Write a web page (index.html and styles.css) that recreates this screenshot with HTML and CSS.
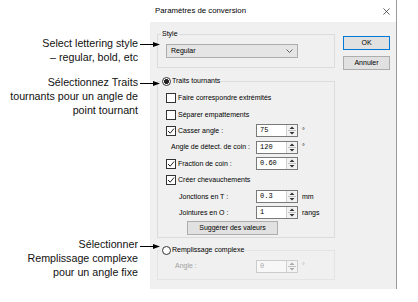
FILE: index.html
```html
<!DOCTYPE html>
<html lang="fr">
<head>
    <meta charset="UTF-8">
    <meta name="viewport" content="width=device-width, initial-scale=1.0">
    <title>Paramètres de conversion</title>
    <link rel="stylesheet" href="styles.css">
</head>
<body>
<div id="page">
    <div class="notes">
        <div class="note note-style">
            <div class="note-line"><span>Select lettering style</span><svg class="arrow" viewBox="0 0 20 7"><line x1="0" y1="3.5" x2="15" y2="3.5"/><polygon points="13,1 20,3.5 13,6"/></svg></div>
            <div class="note-line">– regular, bold, etc</div>
        </div>
        <div class="note note-traits">
            <div class="note-line"><span>Sélectionnez Traits</span><svg class="arrow" viewBox="0 0 20 7"><line x1="0" y1="3.5" x2="15" y2="3.5"/><polygon points="13,1 20,3.5 13,6"/></svg></div>
            <div class="note-line">tournants pour un angle de</div>
            <div class="note-line">point tournant</div>
        </div>
        <div class="note note-fill">
            <div class="note-line"><span>Sélectionner</span><svg class="arrow arrow-low" viewBox="0 0 20 7"><line x1="0" y1="3.5" x2="15" y2="3.5"/><polygon points="13,1 20,3.5 13,6"/></svg></div>
            <div class="note-line">Remplissage complexe</div>
            <div class="note-line">pour un angle fixe</div>
        </div>
    </div>

    <div class="dialog">
        <div class="titlebar">
            <span class="title">Paramètres de conversion</span>
            <svg class="close" viewBox="0 0 8 8"><path d="M0.5 0.5 L7.5 7.5 M7.5 0.5 L0.5 7.5"/></svg>
        </div>
        <div class="dlg-body">
            <div class="groups">
                <fieldset class="group group-style">
                    <legend>Style</legend>
                    <div class="combo">
                        <span>Regular</span>
                        <svg class="chevron" viewBox="0 0 7 4"><path d="M0.5 0.5 L3.5 3.5 L6.5 0.5"/></svg>
                    </div>
                </fieldset>

                <fieldset class="group group-traits">
                    <legend><span class="radio checked"></span>Traits tournants</legend>
                    <div class="row">
                        <span class="box"></span>Faire correspondre extrémités
                    </div>
                    <div class="row">
                        <span class="box"></span>Séparer empattements
                    </div>
                    <div class="row">
                        <span class="cell"><span class="box checked"><svg viewBox="0 0 8 8"><path d="M1 4 L3.2 6.2 L7 1.6"/></svg></span>Casser angle :</span>
                        <span class="field"><span class="value">75</span><span class="spin"><svg viewBox="0 0 9 11"><polygon points="2,4 7,4 4.5,1.5"/><line x1="0.5" y1="5.5" x2="8.5" y2="5.5"/><polygon points="2,7 7,7 4.5,9.5"/></svg></span></span>
                        <span class="unit">°</span>
                    </div>
                    <div class="row">
                        <span class="cell cell-right">Angle de détect. de coin :</span>
                        <span class="field"><span class="value">120</span><span class="spin"><svg viewBox="0 0 9 11"><polygon points="2,4 7,4 4.5,1.5"/><line x1="0.5" y1="5.5" x2="8.5" y2="5.5"/><polygon points="2,7 7,7 4.5,9.5"/></svg></span></span>
                        <span class="unit">°</span>
                    </div>
                    <div class="row">
                        <span class="cell"><span class="box checked"><svg viewBox="0 0 8 8"><path d="M1 4 L3.2 6.2 L7 1.6"/></svg></span>Fraction de coin :</span>
                        <span class="field"><span class="value">0.60</span><span class="spin"><svg viewBox="0 0 9 11"><polygon points="2,4 7,4 4.5,1.5"/><line x1="0.5" y1="5.5" x2="8.5" y2="5.5"/><polygon points="2,7 7,7 4.5,9.5"/></svg></span></span>
                    </div>
                    <div class="row">
                        <span class="box checked"><svg viewBox="0 0 8 8"><path d="M1 4 L3.2 6.2 L7 1.6"/></svg></span>Créer chevauchements
                    </div>
                    <div class="row">
                        <span class="cell cell-indent">Jonctions en T :</span>
                        <span class="field"><span class="value">0.3</span><span class="spin"><svg viewBox="0 0 9 11"><polygon points="2,4 7,4 4.5,1.5"/><line x1="0.5" y1="5.5" x2="8.5" y2="5.5"/><polygon points="2,7 7,7 4.5,9.5"/></svg></span></span>
                        <span class="unit">mm</span>
                    </div>
                    <div class="row">
                        <span class="cell cell-indent">Jointures en O :</span>
                        <span class="field"><span class="value">1</span><span class="spin"><svg viewBox="0 0 9 11"><polygon points="2,4 7,4 4.5,1.5"/><line x1="0.5" y1="5.5" x2="8.5" y2="5.5"/><polygon points="2,7 7,7 4.5,9.5"/></svg></span></span>
                        <span class="unit">rangs</span>
                    </div>
                    <button class="btn btn-suggest">Suggérer des valeurs</button>
                </fieldset>

                <fieldset class="group group-fill">
                    <legend><span class="radio"></span>Remplissage complexe</legend>
                    <div class="row disabled">
                        <span class="cell cell-disabled">Angle :</span>
                        <span class="field"><span class="value">0</span><span class="spin"><svg viewBox="0 0 9 11"><polygon points="2,4 7,4 4.5,1.5"/><line x1="0.5" y1="5.5" x2="8.5" y2="5.5"/><polygon points="2,7 7,7 4.5,9.5"/></svg></span></span>
                        <span class="unit">°</span>
                    </div>
                </fieldset>
            </div>
            <div class="buttons">
                <button class="btn btn-default">OK</button>
                <button class="btn">Annuler</button>
            </div>
        </div>
    </div>
</div>
</body>
</html>
```

FILE: styles.css
```css
body {
    margin: 0;
    background: #fff;
}

#page {
    display: flex;
    align-items: flex-start;
    width: 418px;
    height: 302px;
    overflow: hidden;
}

/* callouts on the left */
.notes {
    position: relative;
    z-index: 1;
    flex: none;
    width: 150px;
    box-sizing: border-box;
    padding: 36px 12px 0 0;
    font: 10.7px/14px "Liberation Sans", Arial, sans-serif;
    color: #111;
}

.note-traits {
    margin-top: 11px;
}

.note-fill {
    margin-top: 120px;
}

.note-line {
    display: flex;
    justify-content: flex-end;
    align-items: center;
    white-space: nowrap;
}

.arrow {
    flex: none;
    width: 20px;
    height: 7px;
    margin: 2px -22px 0 2px;
}

.arrow-low {
    margin-top: 5px;
}

.arrow line {
    stroke: #000;
    stroke-width: 1;
}

.arrow polygon {
    fill: #000;
}

/* dialog */
.dialog {
    flex: none;
    width: 247px;
    box-sizing: border-box;
    border-right: 1px solid #9a9a9a;
    font: 7px/10px "Liberation Sans", Arial, sans-serif;
    color: #000;
}

.titlebar {
    display: flex;
    align-items: center;
    justify-content: space-between;
    height: 22px;
    padding: 0 6px 0 5px;
    background: #fff;
}

.title {
    font-size: 7.8px;
}

.close {
    width: 7px;
    height: 7px;
}

.close path {
    stroke: #222;
    stroke-width: 0.8;
    fill: none;
}

.dlg-body {
    display: flex;
    gap: 8px;
    padding: 7px 7px 9px 7px;
    background: #f0f0f0;
}

.groups {
    flex: none;
    width: 178px;
}

.group {
    margin: 0;
    padding: 0 6px 0 8px;
    border: 1px solid #dcdcdc;
    min-width: 0;
}

.group legend {
    display: flex;
    align-items: center;
    height: 10px;
    margin-left: -5px;
    padding: 0 1px;
}

.group-style {
    padding-top: 5px;
    padding-bottom: 9px;
}

.group-traits {
    margin-top: 8px;
    padding-top: 4px;
    padding-bottom: 2px;
}

.group-fill {
    margin-top: 7px;
    padding-top: 3px;
    padding-bottom: 4px;
    border-color: #e4e4e4;
}

.combo {
    display: flex;
    align-items: center;
    justify-content: space-between;
    width: 132px;
    height: 14px;
    box-sizing: border-box;
    padding: 0 4px 0 4px;
    background: #e5e5e5;
    border: 1px solid #adadad;
}

.chevron {
    width: 7px;
    height: 4px;
}

.chevron path {
    stroke: #444;
    stroke-width: 0.8;
    fill: none;
}

.radio {
    display: inline-block;
    width: 9px;
    height: 9px;
    box-sizing: border-box;
    margin-right: 1px;
    border: 1px solid #333;
    border-radius: 50%;
    background: #fff;
}

.radio.checked {
    background: radial-gradient(circle, #222 0 2.2px, #fff 2.7px);
}

.row {
    display: flex;
    align-items: center;
    height: 16.4px;
    white-space: nowrap;
}

.box {
    display: inline-flex;
    align-items: center;
    justify-content: center;
    flex: none;
    width: 10px;
    height: 10px;
    box-sizing: border-box;
    margin-right: 2px;
    border: 1px solid #333;
    background: #fff;
}

.box svg {
    width: 8px;
    height: 8px;
}

.box path {
    stroke: #222;
    stroke-width: 1;
    fill: none;
}

.cell {
    display: flex;
    align-items: center;
    flex: none;
    width: 90px;
}

.cell-right {
    justify-content: flex-end;
    padding-right: 6px;
    box-sizing: border-box;
}

.cell-indent {
    padding-left: 13px;
    box-sizing: border-box;
}

.cell-disabled {
    padding-left: 9px;
    box-sizing: border-box;
    color: #a0a0a0;
}

.field {
    display: flex;
    flex: none;
    width: 42px;
    height: 13px;
    box-sizing: border-box;
    border: 1px solid #7a7a7a;
    background: #fff;
}

.value {
    flex: 1;
    padding-left: 3px;
    line-height: 11px;
    font-family: "Liberation Mono", "DejaVu Sans Mono", monospace;
    font-size: 7px;
}

.spin {
    display: flex;
    flex: none;
    width: 10px;
    border-left: 1px solid #d0d0d0;
    background: #f3f3f3;
}

.spin svg {
    width: 10px;
    height: 11px;
}

.spin polygon {
    fill: #333;
}

.spin line {
    stroke: #b5b5b5;
    stroke-width: 0.8;
}

.unit {
    margin-left: 4px;
}

.disabled .field {
    border-color: #cccccc;
    background: #f7f7f7;
}

.disabled .value,
.disabled .unit {
    color: #a8a8a8;
}

.disabled .spin polygon {
    fill: #a8a8a8;
}

.btn {
    display: block;
    box-sizing: border-box;
    padding: 0;
    height: 14px;
    font: 7px/12px "Liberation Sans", Arial, sans-serif;
    color: #000;
    background: #e1e1e1;
    border: 1px solid #adadad;
}

.btn-suggest {
    width: 91px;
    margin-left: 21px;
}

.buttons {
    display: flex;
    flex-direction: column;
    gap: 6px;
    flex: none;
    width: 47px;
    padding-top: 7px;
}

.buttons .btn {
    width: 47px;
}

.btn-default {
    border-color: #0078d7;
}
```
